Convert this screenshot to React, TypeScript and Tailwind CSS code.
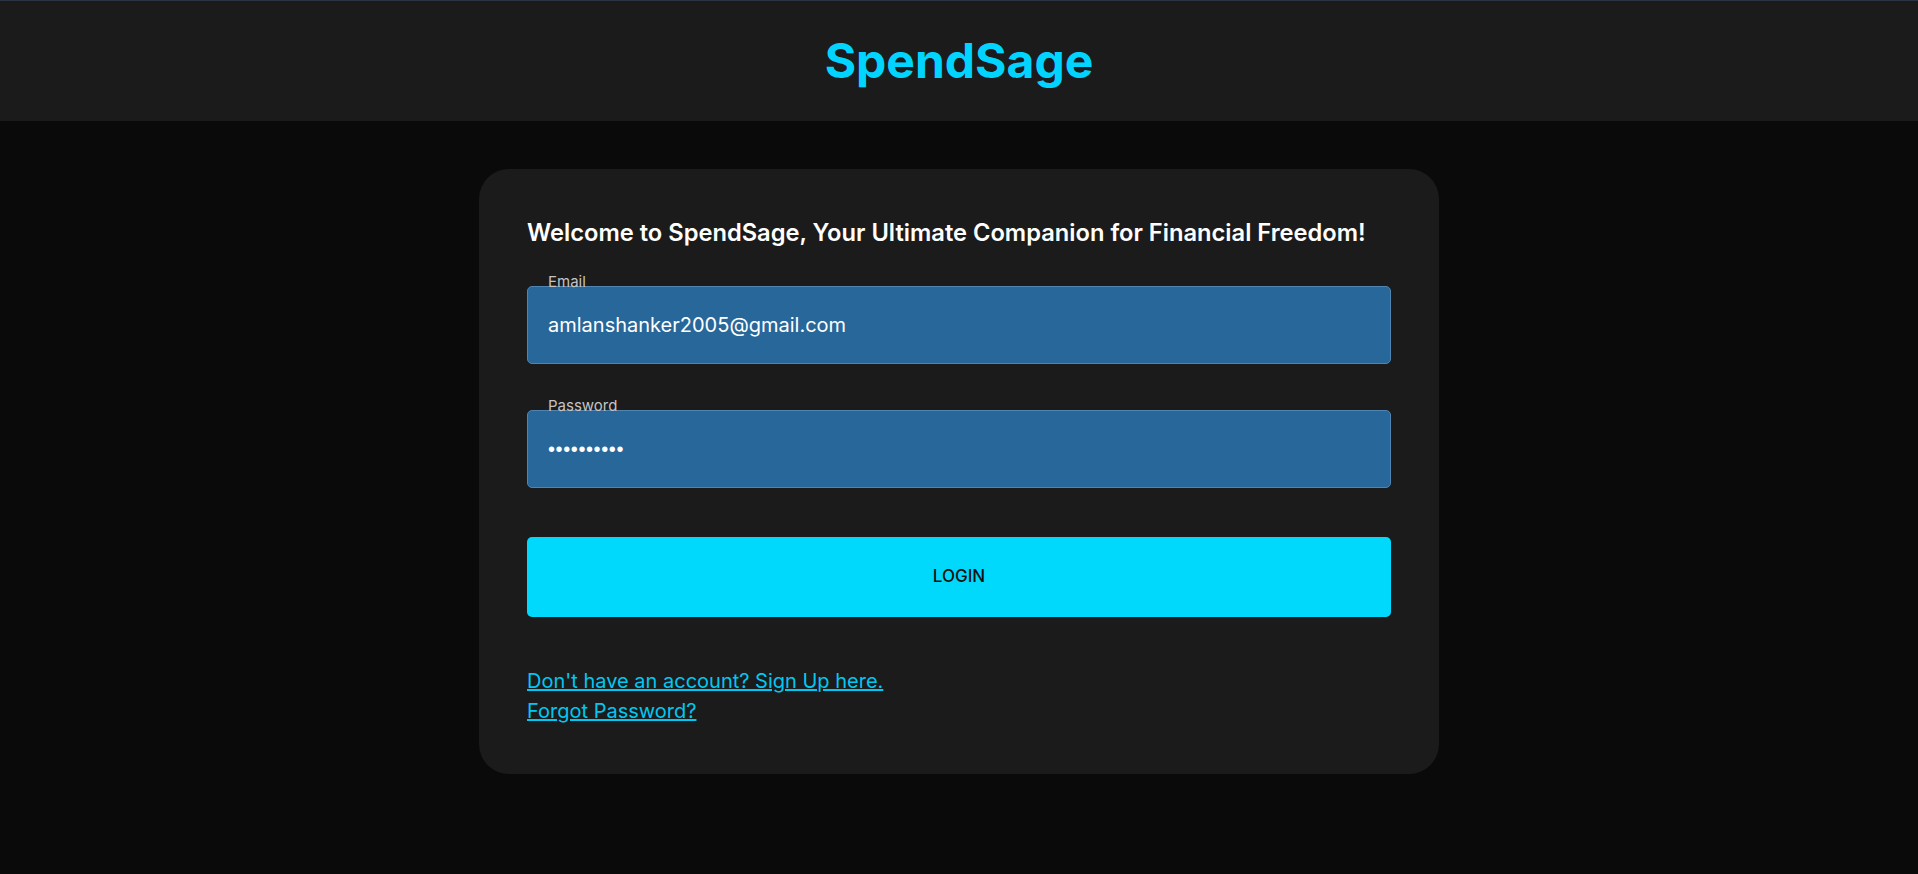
const Field = ({ label, value, type }: { label: string; value: string; type: string }) => {
    return (
        <div className="relative">
            <span className="absolute left-[17px] -top-3 px-1 text-[15px] leading-4 text-[#c4c4c4]">{label}</span>
            <input
                type={type}
                defaultValue={value}
                className={
                    type === 'password'
                        ? "w-full h-[78px] rounded-[5px] border border-[#4f84b3] bg-[#276799] pl-[20px] text-[20px] tracking-[0.6px] text-white outline-none font-['Liberation_Sans',sans-serif]"
                        : "w-full h-[78px] rounded-[5px] border border-[#4f84b3] bg-[#276799] pl-[20px] text-[20px] text-white outline-none"
                }
            />
        </div>
    )
}

const App = () => {
    return (
        <div className="min-h-screen bg-[#0a0a0a] font-['Inter',sans-serif]">
            <header className="h-[121px] border-t border-[#2c3546] bg-[#1b1b1b] flex items-center justify-center">
                <h1 className="text-[48px] font-bold text-[#00d4ff]">SpendSage</h1>
            </header>
            <main className="flex justify-center pt-12 pb-12">
                <div className="w-[960px] rounded-[30px] bg-[#1b1b1b] p-12">
                    <h2 className="text-[23.7px] leading-8 font-semibold text-white">
                        Welcome to SpendSage, Your Ultimate Companion for Financial Freedom!
                    </h2>
                    <div className="mt-[37px]">
                        <Field label="Email" value="amlanshanker2005@gmail.com" type="email" />
                    </div>
                    <div className="mt-[46px]">
                        <Field label="Password" value="1234567890" type="password" />
                    </div>
                    <button className="mt-[49px] w-full h-[80px] rounded-[5px] bg-[#00d8fc] text-[17px] font-medium text-[#111]">
                        LOGIN
                    </button>
                    <div className="mt-[49px] flex flex-col items-start text-[20px] leading-[30px] text-[#00c8f2]">
                        <a href="#" className="underline">Don't have an account? Sign Up here.</a>
                        <a href="#" className="underline">Forgot Password?</a>
                    </div>
                </div>
            </main>
        </div>
    )
}

export default App
